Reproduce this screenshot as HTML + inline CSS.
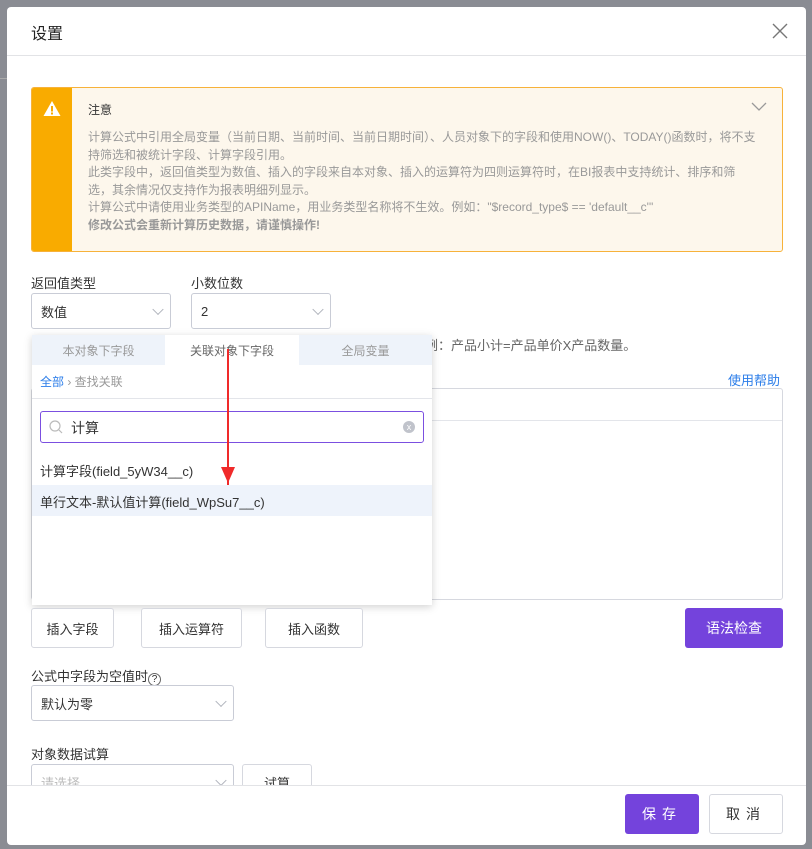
<!DOCTYPE html>
<html><head><meta charset="utf-8"><style>
*{box-sizing:border-box;margin:0;padding:0}
body{width:812px;height:849px;background:#8a8c93;font-family:"Liberation Sans","Noto Sans CJK SC",sans-serif;position:relative;overflow:hidden;font-size:13px;color:#333}
.abs{position:absolute}
.modal{left:7px;top:7px;width:799px;height:838px;background:#fff;border-radius:4px;overflow:hidden}
.sel{border:1px solid #c9ccd6;border-radius:3px;background:#fff;font-size:13px;padding-left:9px;display:flex;align-items:center}
.chev{position:absolute;right:8px;top:50%;width:8px;height:8px;border-right:1px solid #b0b3bc;border-bottom:1px solid #b0b3bc;transform:translateY(-70%) rotate(45deg)}
.btn{border:1px solid #d6d8df;border-radius:3px;background:#fff;display:flex;align-items:center;justify-content:center;font-size:13px;color:#333}
.pbtn{background:#7443dc;color:#fff;border-radius:3px;display:flex;align-items:center;justify-content:center;font-size:14px}
.note p{font-size:12px;color:#999;line-height:17.5px}
</style></head><body>
<div class="abs" style="left:0;top:78px;width:7px;height:1px;background:#aaa"></div>
<div class="abs modal">
 <div class="abs" style="left:24px;top:13px;font-size:16px;color:#222">设置</div>
 <svg class="abs" style="left:765px;top:16px" width="16" height="16"><path d="M1 1L15 15M15 1L1 15" stroke="#777" stroke-width="1.4"/></svg>
 <div class="abs" style="left:0;top:48px;width:799px;height:1px;background:#e2e3e6"></div>
</div>
<div class="abs note" style="left:31px;top:87px;width:752px;height:165px;border:1px solid #f7b23a;background:#fdf7ec;border-radius:3px;overflow:hidden">
 <div class="abs" style="left:0;top:0;width:40px;height:100%;background:#f9ab00"></div>
 <svg class="abs" style="left:11px;top:12px" width="18" height="17"><path d="M9 1L17.5 16H0.5Z" fill="#fff"/><rect x="8" y="6" width="2" height="5.5" fill="#f9ab00"/><rect x="8" y="12.5" width="2" height="2" fill="#f9ab00"/></svg>
 <div class="abs" style="left:56px;top:13px;font-size:12px;color:#333">注意</div>
 <svg class="abs" style="left:719px;top:14px" width="16" height="10"><path d="M1 1L8 8L15 1" stroke="#999" stroke-width="1.3" fill="none"/></svg>
 <div class="abs" style="left:56px;top:41px;width:670px">
  <p>计算公式中引用全局变量（当前日期、当前时间、当前日期时间）、人员对象下的字段和使用NOW()、TODAY()函数时，将不支持筛选和被统计字段、计算字段引用。</p>
  <p>此类字段中，返回值类型为数值、插入的字段来自本对象、插入的运算符为四则运算符时，在BI报表中支持统计、排序和筛选，其余情况仅支持作为报表明细列显示。</p>
  <p>计算公式中请使用业务类型的APIName，用业务类型名称将不生效。例如："$record_type$ == 'default__c'"</p>
  <p style="font-weight:bold">修改公式会重新计算历史数据，请谨慎操作!</p>
 </div>
</div>
<div class="abs" style="left:31px;top:273px;font-size:13px">返回值类型</div>
<div class="abs" style="left:191px;top:273px;font-size:13px">小数位数</div>
<div class="abs sel" style="left:31px;top:293px;width:140px;height:36px">数值<span class="chev"></span></div>
<div class="abs sel" style="left:191px;top:293px;width:140px;height:36px">2<span class="chev"></span></div>
<div class="abs" style="left:412px;top:335px;font-size:13px;color:#666">示例：产品小计=产品单价X产品数量。</div>
<div class="abs" style="left:728px;top:370px;font-size:13px;color:#2b7de9">使用帮助</div>
<div class="abs" style="left:31px;top:388px;width:752px;height:212px;border:1px solid #d6d8df;border-radius:3px"></div>
<div class="abs" style="left:32px;top:420px;width:750px;height:1px;background:#e3e5ea"></div>
<div class="abs" style="left:32px;top:335px;width:400px;height:270px;background:#fff;box-shadow:0 2px 8px rgba(0,0,0,.18)">
 <div class="abs" style="left:0;top:0;width:400px;height:30px;background:#eef3fa"></div>
 <div class="abs" style="left:133px;top:0;width:134px;height:30px;background:#fff"></div>
 <div class="abs" style="left:0;top:7px;width:133px;text-align:center;font-size:12px;color:#999">本对象下字段</div>
 <div class="abs" style="left:133px;top:7px;width:134px;text-align:center;font-size:12px;color:#666">关联对象下字段</div>
 <div class="abs" style="left:267px;top:7px;width:133px;text-align:center;font-size:12px;color:#999">全局变量</div>
 <div class="abs" style="left:8px;top:38px;font-size:12px;color:#999"><span style="color:#2b7de9">全部</span> › 查找关联</div>
 <div class="abs" style="left:0;top:63px;width:400px;height:1px;background:#e3e5ea"></div>
 <div class="abs" style="left:8px;top:76px;width:384px;height:32px;border:1px solid #7b4fe0;border-radius:3px"></div>
 <svg class="abs" style="left:17px;top:85px" width="14" height="14"><circle cx="6" cy="6" r="5" stroke="#bbb" fill="none" stroke-width="1.2"/><path d="M10 10L13 13" stroke="#bbb" stroke-width="1.2"/></svg>
 <div class="abs" style="left:39px;top:83px;font-size:14px;color:#333">计算</div>
 <div class="abs" style="left:371px;top:86px;width:12px;height:12px;border-radius:50%;background:#c0c3cb;color:#fff;font-size:9px;line-height:12px;text-align:center">x</div>
 <div class="abs" style="left:8px;top:126px;font-size:13px">计算字段(field_5yW34__c)</div>
 <div class="abs" style="left:0;top:150px;width:400px;height:31px;background:#eef3fb"></div>
 <div class="abs" style="left:8px;top:157px;font-size:13px">单行文本-默认值计算(field_WpSu7__c)</div>
 <div class="abs" style="left:195px;top:14px;width:2px;height:136px;background:#f02a2a"></div>
 <svg class="abs" style="left:189px;top:132px" width="14" height="16"><path d="M0 0L14 0L7 16Z" fill="#f02a2a"/></svg>
</div>
<div class="abs btn" style="left:31px;top:608px;width:83px;height:40px">插入字段</div>
<div class="abs btn" style="left:141px;top:608px;width:101px;height:40px">插入运算符</div>
<div class="abs btn" style="left:265px;top:608px;width:98px;height:40px">插入函数</div>
<div class="abs pbtn" style="left:685px;top:608px;width:98px;height:40px">语法检查</div>
<div class="abs" style="left:31px;top:666px;font-size:13px">公式中字段为空值时<span style="display:inline-block;width:13px;height:13px;border:1px solid #666;border-radius:50%;font-size:10px;line-height:11px;text-align:center;vertical-align:-1px">?</span></div>
<div class="abs sel" style="left:31px;top:685px;width:203px;height:36px">默认为零<span class="chev"></span></div>
<div class="abs" style="left:31px;top:744px;font-size:13px">对象数据试算</div>
<div class="abs" style="left:31px;top:764px;width:203px;height:21px;overflow:hidden"><div class="sel" style="width:203px;height:36px;position:relative;color:#bbb">请选择<span class="chev"></span></div></div>
<div class="abs" style="left:242px;top:764px;width:70px;height:21px;overflow:hidden"><div class="btn" style="width:70px;height:36px">试算</div></div>
<div class="abs" style="left:7px;top:785px;width:799px;height:1px;background:#e2e3e6"></div>
<div class="abs pbtn" style="left:625px;top:794px;width:74px;height:40px;letter-spacing:6px">保存</div>
<div class="abs btn" style="left:709px;top:794px;width:74px;height:40px;letter-spacing:6px;font-size:14px">取消</div>
</body></html>
